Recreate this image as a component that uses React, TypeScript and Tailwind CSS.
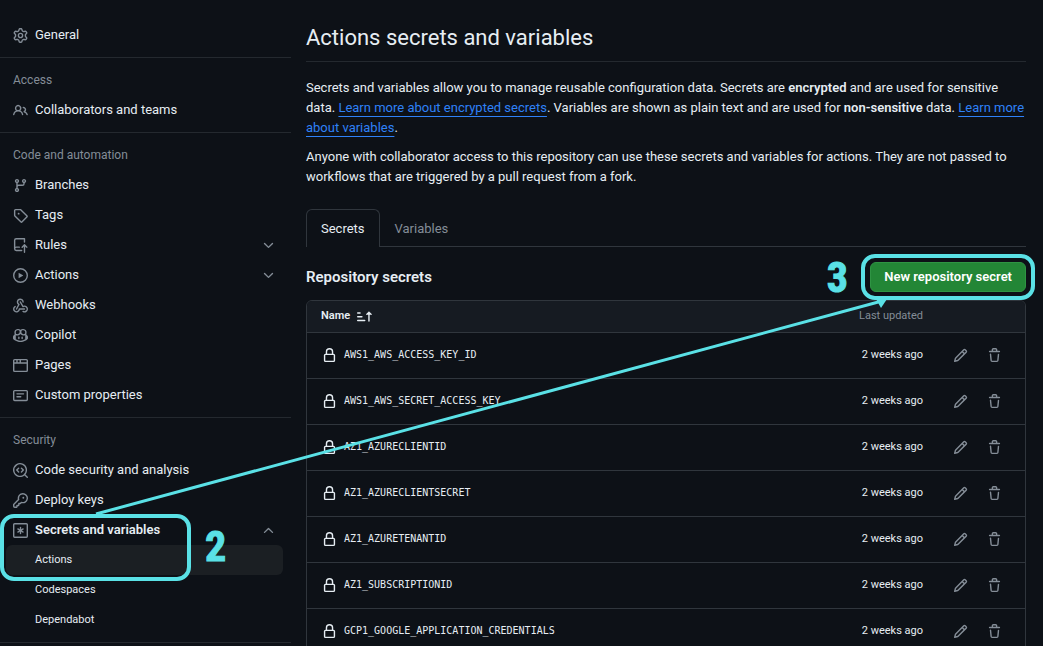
import type { ReactNode } from 'react';

const ICONS = {
  gear: 'M8 0a8.2 8.2 0 0 1 .701.031C9.444.095 9.99.645 10.16 1.29l.288 1.107c.018.066.079.158.212.224.231.114.454.243.668.386.123.082.233.09.299.071l1.103-.303c.644-.176 1.392.021 1.82.63.27.385.506.792.704 1.218.315.675.111 1.422-.364 1.891l-.814.806c-.049.048-.098.147-.088.294.016.257.016.515 0 .772-.01.147.038.246.088.294l.814.806c.475.469.679 1.216.364 1.891a7.977 7.977 0 0 1-.704 1.217c-.428.61-1.176.807-1.82.63l-1.102-.302c-.067-.019-.177-.011-.3.071a5.909 5.909 0 0 1-.668.386c-.133.066-.194.158-.211.224l-.29 1.106c-.168.646-.715 1.196-1.458 1.26a8.006 8.006 0 0 1-1.402 0c-.743-.064-1.289-.614-1.458-1.26l-.289-1.106c-.018-.066-.079-.158-.212-.224a5.738 5.738 0 0 1-.668-.386c-.123-.082-.233-.09-.299-.071l-1.103.303c-.644.176-1.392-.021-1.82-.63a8.12 8.12 0 0 1-.704-1.218c-.315-.675-.111-1.422.363-1.891l.815-.806c.05-.048.098-.147.088-.294a6.214 6.214 0 0 1 0-.772c.01-.147-.038-.246-.088-.294l-.815-.806C.635 6.045.431 5.298.746 4.623a7.92 7.92 0 0 1 .704-1.217c.428-.61 1.176-.807 1.82-.63l1.102.302c.067.019.177.011.3-.071.214-.143.437-.272.668-.386.133-.066.194-.158.211-.224l.29-1.106C6.009.645 6.556.095 7.299.03 7.53.01 7.764 0 8 0Zm-.571 1.525c-.036.003-.108.036-.137.146l-.289 1.105c-.147.561-.549.967-.998 1.189-.173.086-.34.183-.5.29-.417.278-.97.423-1.529.27l-1.103-.303c-.109-.03-.175.016-.195.045-.22.312-.412.644-.573.99-.014.031-.021.11.059.19l.815.806c.411.406.562.957.53 1.456a4.709 4.709 0 0 0 0 .582c.032.499-.119 1.05-.53 1.456l-.815.806c-.081.08-.073.159-.059.19.162.346.353.677.573.989.02.03.085.076.195.046l1.102-.303c.56-.153 1.113-.008 1.53.27.161.107.328.204.501.29.447.222.85.629.997 1.189l.289 1.105c.029.109.101.143.137.146a6.6 6.6 0 0 0 1.142 0c.036-.003.108-.036.137-.146l.289-1.105c.147-.561.549-.967.998-1.189.173-.086.34-.183.5-.29.417-.278.97-.423 1.529-.27l1.103.303c.109.029.175-.016.195-.045.22-.313.411-.644.573-.99.014-.031.021-.11-.059-.19l-.815-.806c-.411-.406-.562-.957-.53-1.456a4.709 4.709 0 0 0 0-.582c-.032-.499.119-1.05.53-1.456l.815-.806c.081-.08.073-.159.059-.19a6.464 6.464 0 0 0-.573-.989c-.02-.03-.085-.076-.195-.046l-1.102.303c-.56.153-1.113.008-1.53-.27a4.44 4.44 0 0 0-.501-.29c-.447-.222-.85-.629-.997-1.189l-.289-1.105c-.029-.11-.101-.143-.137-.146a6.6 6.6 0 0 0-1.142 0ZM11 8a3 3 0 1 1-6 0 3 3 0 0 1 6 0ZM9.5 8a1.5 1.5 0 1 0-3.001.001A1.5 1.5 0 0 0 9.5 8Z',
  people: 'M2 5.5a3.5 3.5 0 1 1 5.898 2.549 5.508 5.508 0 0 1 3.034 4.084.75.75 0 1 1-1.482.235 4 4 0 0 0-7.9 0 .75.75 0 0 1-1.482-.236A5.507 5.507 0 0 1 3.102 8.05 3.493 3.493 0 0 1 2 5.5ZM11 4a3.001 3.001 0 0 1 2.22 5.018 5.01 5.01 0 0 1 2.56 3.012.749.749 0 0 1-.885.954.752.752 0 0 1-.549-.514 3.507 3.507 0 0 0-2.522-2.372.75.75 0 0 1-.574-.73v-.352a.75.75 0 0 1 .416-.672A1.5 1.5 0 0 0 11 5.5.75.75 0 0 1 11 4Zm-5.5-.5a2 2 0 1 0-.001 3.999A2 2 0 0 0 5.5 3.5Z',
  branch: 'M9.5 3.25a2.25 2.25 0 1 1 3 2.122V6A2.5 2.5 0 0 1 10 8.5H6a1 1 0 0 0-1 1v1.128a2.251 2.251 0 1 1-1.5 0V5.372a2.25 2.25 0 1 1 1.5 0v1.836A2.493 2.493 0 0 1 6 7h4a1 1 0 0 0 1-1v-.628A2.25 2.25 0 0 1 9.5 3.25Zm-6 0a.75.75 0 1 0 1.5 0 .75.75 0 0 0-1.5 0Zm8.25-.75a.75.75 0 1 0 0 1.5.75.75 0 0 0 0-1.5ZM4.25 12a.75.75 0 1 0 0 1.5.75.75 0 0 0 0-1.5Z',
  tag: 'M1 7.775V2.75C1 1.784 1.784 1 2.75 1h5.025c.464 0 .91.184 1.238.513l6.25 6.25a1.75 1.75 0 0 1 0 2.474l-5.026 5.026a1.75 1.75 0 0 1-2.474 0l-6.25-6.25A1.752 1.752 0 0 1 1 7.775Zm1.5 0c0 .066.026.13.073.177l6.25 6.25a.25.25 0 0 0 .354 0l5.025-5.025a.25.25 0 0 0 0-.354l-6.25-6.25a.25.25 0 0 0-.177-.073H2.75a.25.25 0 0 0-.25.25ZM6 5a1 1 0 1 1 0 2 1 1 0 0 1 0-2Z',
  rules: 'M1 2.5A2.5 2.5 0 0 1 3.5 0h8.75a.75.75 0 0 1 .75.75v3.5a.75.75 0 0 1-1.5 0V1.5h-8a1 1 0 0 0-1 1v6.708A2.493 2.493 0 0 1 3.5 9h3.25a.75.75 0 0 1 0 1.5H3.5a1 1 0 0 0 0 2h5.75a.75.75 0 0 1 0 1.5H3.5A2.5 2.5 0 0 1 1 11.5Zm13.23 7.79h-.001l-1.224-1.224v6.184a.75.75 0 0 1-1.5 0V9.066L10.28 10.29a.75.75 0 0 1-1.06-1.061l2.505-2.504a.75.75 0 0 1 1.06 0L15.29 9.23a.751.751 0 0 1-.018 1.042.751.751 0 0 1-1.042.018Z',
  play: 'M8 0a8 8 0 1 1 0 16A8 8 0 0 1 8 0ZM1.5 8a6.5 6.5 0 1 0 13 0 6.5 6.5 0 0 0-13 0Zm4.879-2.773 4.264 2.559a.25.25 0 0 1 0 .428l-4.264 2.559A.25.25 0 0 1 6 10.559V5.442a.25.25 0 0 1 .379-.215Z',
  webhook: 'M5.5 4.25a2.25 2.25 0 0 1 4.5 0 .75.75 0 0 0 1.5 0 3.75 3.75 0 1 0-6.14 2.889l-2.272 4.258a.75.75 0 0 0 1.324.706L7 7.25a.75.75 0 0 0-.309-1.015A2.25 2.25 0 0 1 5.5 4.25Z M7.364 3.607a.75.75 0 0 1 1.03.257l2.608 4.349a3.75 3.75 0 1 1-.628 6.785.75.75 0 0 1 .752-1.299 2.25 2.25 0 1 0-.033-3.88.75.75 0 0 1-1.03-.256L7.107 4.636a.75.75 0 0 1 .257-1.03Z M2.9 8.776A.75.75 0 0 1 2.625 9.8 2.25 2.25 0 1 0 6 11.75a.75.75 0 0 1 .75-.751h5.5a.75.75 0 0 1 0 1.5H7.425a3.751 3.751 0 1 1-5.55-3.998.75.75 0 0 1 1.024.274Z',
  copilot: 'M7.998 15.035c-4.562 0-7.873-2.914-7.998-3.749V9.338c.085-.628.677-1.686 1.588-2.065.013-.07.024-.143.036-.218.029-.183.06-.384.126-.612-.201-.508-.254-1.084-.254-1.656 0-.87.128-1.769.693-2.484.579-.733 1.494-1.124 2.724-1.261 1.206-.134 2.262.034 2.944.765.05.053.096.108.139.165.044-.057.094-.112.143-.165.682-.731 1.738-.899 2.944-.765 1.23.137 2.145.528 2.724 1.261.566.715.693 1.614.693 2.484 0 .572-.053 1.148-.254 1.656.066.228.098.429.126.612.012.076.024.148.037.218.924.385 1.522 1.471 1.591 2.095v1.872c0 .766-3.351 3.795-8.002 3.795Zm0-1.485c2.28 0 4.584-1.11 5.002-1.433V7.862l-.023-.116c-.49.21-1.075.291-1.727.291-1.146 0-2.059-.327-2.71-.991A3.222 3.222 0 0 1 8 6.303a3.24 3.24 0 0 1-.544.743c-.65.664-1.563.991-2.71.991-.652 0-1.236-.081-1.727-.291l-.023.116v4.255c.419.323 2.722 1.433 5.002 1.433ZM6.762 2.83c-.193-.206-.637-.413-1.682-.297-1.019.113-1.479.404-1.713.7-.247.312-.369.789-.369 1.554 0 .793.129 1.171.308 1.371.162.181.519.379 1.442.379.853 0 1.339-.235 1.638-.54.315-.322.527-.827.617-1.553.117-.935-.037-1.395-.241-1.614Zm4.155-.297c-1.044-.116-1.488.091-1.681.297-.204.219-.359.679-.242 1.614.091.726.303 1.231.618 1.553.299.305.784.54 1.638.54.922 0 1.28-.198 1.442-.379.179-.2.308-.578.308-1.371 0-.765-.123-1.242-.37-1.554-.233-.296-.693-.587-1.713-.7Z M6.25 9.037a.75.75 0 0 1 .75.75v1.501a.75.75 0 0 1-1.5 0V9.787a.75.75 0 0 1 .75-.75Zm4.25.75v1.501a.75.75 0 0 1-1.5 0V9.787a.75.75 0 0 1 1.5 0Z',
  browser: 'M0 2.75C0 1.784.784 1 1.75 1h12.5c.966 0 1.75.784 1.75 1.75v10.5A1.75 1.75 0 0 1 14.25 15H1.75A1.75 1.75 0 0 1 0 13.25ZM14.5 6h-13v7.25c0 .138.112.25.25.25h12.5a.25.25 0 0 0 .25-.25Zm-6-3.5v2h6V2.75a.25.25 0 0 0-.25-.25ZM5 2.5v2h2v-2Zm-3.25 0a.25.25 0 0 0-.25.25V4.5h2v-2Z',
  note: 'M0 3.75C0 2.784.784 2 1.75 2h12.5c.966 0 1.75.784 1.75 1.75v8.5A1.75 1.75 0 0 1 14.25 14H1.75A1.75 1.75 0 0 1 0 12.25Zm1.75-.25a.25.25 0 0 0-.25.25v8.5c0 .138.112.25.25.25h12.5a.25.25 0 0 0 .25-.25v-8.5a.25.25 0 0 0-.25-.25ZM3.5 6.25a.75.75 0 0 1 .75-.75h7a.75.75 0 0 1 0 1.5h-7a.75.75 0 0 1-.75-.75Zm.75 2.25h4a.75.75 0 0 1 0 1.5h-4a.75.75 0 0 1 0-1.5Z',
  codescan: 'M8.47 4.97a.75.75 0 0 0 0 1.06L9.94 7.5 8.47 8.97a.75.75 0 1 0 1.06 1.06l2-2a.75.75 0 0 0 0-1.06l-2-2a.75.75 0 0 0-1.06 0ZM6.53 6.03a.75.75 0 0 0-1.06-1.06l-2 2a.75.75 0 0 0 0 1.06l2 2a.75.75 0 1 0 1.06-1.06L5.06 7.5l1.47-1.47Z M12.246 13.307a7.501 7.501 0 1 1 1.06-1.06l2.474 2.473a.749.749 0 0 1-.326 1.275.749.749 0 0 1-.734-.215ZM1.5 7.5a6.002 6.002 0 0 0 3.608 5.504 6.002 6.002 0 0 0 6.486-1.117.748.748 0 0 1 .292-.293A6 6 0 1 0 1.5 7.5Z',
  key: 'M10.5 0a5.499 5.499 0 1 1-1.288 10.848l-.932.932a.749.749 0 0 1-.53.22H7v.75a.749.749 0 0 1-.22.53l-.5.5a.749.749 0 0 1-.53.22H5v.75a.749.749 0 0 1-.22.53l-.5.5a.749.749 0 0 1-.53.22h-2A1.75 1.75 0 0 1 0 14.25v-2c0-.199.079-.389.22-.53l4.932-4.932A5.5 5.5 0 0 1 10.5 0Zm-4 5.5c-.001.431.069.86.205 1.269a.75.75 0 0 1-.181.768L1.5 12.56v1.69c0 .138.112.25.25.25h1.69l.06-.06v-1.19a.75.75 0 0 1 .75-.75h1.19l.06-.06v-1.19a.75.75 0 0 1 .75-.75h1.19l1.023-1.025a.75.75 0 0 1 .768-.18A4 4 0 1 0 6.5 5.5ZM11 6a1 1 0 1 1 0-2 1 1 0 0 1 0 2Z',
  asterisk: 'M0 1.75C0 .784.784 0 1.75 0h12.5C15.216 0 16 .784 16 1.75v12.5A1.75 1.75 0 0 1 14.25 16H1.75A1.75 1.75 0 0 1 0 14.25ZM1.75 1.5a.25.25 0 0 0-.25.25v12.5c0 .138.112.25.25.25h12.5a.25.25 0 0 0 .25-.25V1.75a.25.25 0 0 0-.25-.25Z M8 4a.75.75 0 0 1 .75.75V6.7l1.69-.975a.75.75 0 0 1 .75 1.3L9.5 8l1.69.976a.75.75 0 0 1-.75 1.298L8.75 9.3v1.951a.75.75 0 0 1-1.5 0V9.299l-1.69.976a.75.75 0 0 1-.75-1.3L6.5 8l-1.69-.975a.75.75 0 0 1 .75-1.3l1.69.976V4.75A.75.75 0 0 1 8 4Z',
  down: 'M12.78 5.22a.749.749 0 0 1 0 1.06l-4.25 4.25a.749.749 0 0 1-1.06 0L3.22 6.28a.749.749 0 1 1 1.06-1.06L8 8.939l3.72-3.719a.749.749 0 0 1 1.06 0Z',
  up: 'M3.22 10.53a.749.749 0 0 1 0-1.06l4.25-4.25a.749.749 0 0 1 1.06 0l4.25 4.25a.749.749 0 1 1-1.06 1.06L8 6.811 4.28 10.53a.749.749 0 0 1-1.06 0Z',
  lock: 'M4 4a4 4 0 0 1 8 0v2h.25c.966 0 1.75.784 1.75 1.75v5.5A1.75 1.75 0 0 1 12.25 15h-8.5A1.75 1.75 0 0 1 2 13.25v-5.5C2 6.784 2.784 6 3.75 6H4Zm8.25 3.5h-8.5a.25.25 0 0 0-.25.25v5.5c0 .138.112.25.25.25h8.5a.25.25 0 0 0 .25-.25v-5.5a.25.25 0 0 0-.25-.25ZM10.5 6V4a2.5 2.5 0 1 0-5 0v2Z',
  pencil: 'M11.013 1.427a1.75 1.75 0 0 1 2.474 0l1.086 1.086a1.75 1.75 0 0 1 0 2.474l-8.61 8.61c-.21.21-.47.364-.756.445l-3.251.93a.75.75 0 0 1-.927-.928l.929-3.25c.081-.286.235-.547.445-.758l8.61-8.61Zm.176 4.823L9.75 4.81l-6.286 6.287a.253.253 0 0 0-.064.108l-.558 1.953 1.953-.558a.253.253 0 0 0 .108-.064Zm1.238-3.763a.25.25 0 0 0-.354 0L10.811 3.75l1.439 1.44 1.263-1.263a.25.25 0 0 0 0-.354Z',
  trash: 'M11 1.75V3h2.25a.75.75 0 0 1 0 1.5H2.75a.75.75 0 0 1 0-1.5H5V1.75C5 .784 5.784 0 6.75 0h2.5C10.216 0 11 .784 11 1.75ZM4.496 6.675l.66 6.6a.25.25 0 0 0 .249.225h5.19a.25.25 0 0 0 .249-.225l.66-6.6a.75.75 0 0 1 1.492.149l-.66 6.6A1.748 1.748 0 0 1 10.595 15h-5.19a1.75 1.75 0 0 1-1.741-1.575l-.66-6.6a.75.75 0 1 1 1.492-.15ZM6.5 1.75V3h3V1.75a.25.25 0 0 0-.25-.25h-2.5a.25.25 0 0 0-.25.25Z',
  sort: 'm12.927 2.573 3 3A.25.25 0 0 1 15.75 6H13.5v6.75a.75.75 0 0 1-1.5 0V6H9.75a.25.25 0 0 1-.177-.427l3-3a.25.25 0 0 1 .354 0ZM0 12.25a.75.75 0 0 1 .75-.75h7.5a.75.75 0 0 1 0 1.5H.75a.75.75 0 0 1-.75-.75Zm0-4a.75.75 0 0 1 .75-.75h4.5a.75.75 0 0 1 0 1.5H.75A.75.75 0 0 1 0 8.25Zm0-4a.75.75 0 0 1 .75-.75h2.5a.75.75 0 0 1 0 1.5H.75A.75.75 0 0 1 0 4.25Z',
};

type IconName = keyof typeof ICONS;

function Icon({ name, className = '' }: { name: IconName; className?: string }) {
  return (
    <svg viewBox="0 0 16 16" fill="currentColor" aria-hidden="true" className={`size-[15px] shrink-0 ${className}`}>
      <path d={ICONS[name]} />
    </svg>
  );
}

function NavLink({ icon, label }: { icon: IconName; label: string }) {
  return (
    <li>
      <a href="#" className="flex h-[30px] items-center gap-[7px] pr-2 pl-[13px]">
        <Icon name={icon} className="text-[#848d97]" />
        {label}
      </a>
    </li>
  );
}

function NavToggle({ icon, label, open = false }: { icon: IconName; label: string; open?: boolean }) {
  return (
    <button
      type="button"
      aria-expanded={open}
      className={`flex h-[30px] w-full items-center gap-[7px] pr-[15px] pl-[13px] text-left ${open ? 'font-semibold' : ''}`}
    >
      <Icon name={icon} className="text-[#848d97]" />
      <span className="grow">{label}</span>
      <Icon name={open ? 'up' : 'down'} className="text-[#848d97]" />
    </button>
  );
}

function Divider() {
  return <hr className="my-[7px] border-[#24292f]" />;
}

function GroupTitle({ children }: { children: ReactNode }) {
  return <h2 className="flex h-[30px] items-center pl-[13px] text-[12px] text-[#848d97]">{children}</h2>;
}

function Sidebar() {
  return (
    <nav aria-label="Repository settings" className="w-[291px] shrink-0 pt-5">
      <ul>
        <NavLink icon="gear" label="General" />
      </ul>
      <Divider />
      <GroupTitle>Access</GroupTitle>
      <ul>
        <NavLink icon="people" label="Collaborators and teams" />
      </ul>
      <Divider />
      <GroupTitle>Code and automation</GroupTitle>
      <ul>
        <NavLink icon="branch" label="Branches" />
        <NavLink icon="tag" label="Tags" />
        <li>
          <NavToggle icon="rules" label="Rules" />
        </li>
        <li>
          <NavToggle icon="play" label="Actions" />
        </li>
        <NavLink icon="webhook" label="Webhooks" />
        <NavLink icon="copilot" label="Copilot" />
        <NavLink icon="browser" label="Pages" />
        <NavLink icon="note" label="Custom properties" />
      </ul>
      <Divider />
      <GroupTitle>Security</GroupTitle>
      <ul>
        <NavLink icon="codescan" label="Code security and analysis" />
        <NavLink icon="key" label="Deploy keys" />
        <li className="relative">
          <NavToggle icon="asterisk" label="Secrets and variables" open />
          <ul className="pr-2 pl-1.5 text-[11px]">
            <li>
              <a href="#" aria-current="page" className="flex h-[30px] items-center rounded-md bg-[#1b1f23] pl-[29px]">
                Actions
              </a>
            </li>
            <li>
              <a href="#" className="flex h-[30px] items-center pl-[29px]">Codespaces</a>
            </li>
            <li>
              <a href="#" className="flex h-[30px] items-center pl-[29px]">Dependabot</a>
            </li>
          </ul>
          <div className="absolute -top-px left-0 h-[67px] w-[191px] rounded-[14px] border-4 border-[#5ae1e6]" />
          <StepNumber className="top-2 left-[205px]">2</StepNumber>
        </li>
      </ul>
      <Divider />
    </nav>
  );
}

function StepNumber({ children, className }: { children: ReactNode; className: string }) {
  return (
    <span
      className={`absolute font-['Roboto_Condensed','Open_Sans_Condensed','Noto_Sans_Condensed','Liberation_Sans',sans-serif] text-[42px] leading-[48px] font-bold text-[#5ae1e6] [-webkit-text-stroke:1px_#5ae1e6] ${className}`}
    >
      {children}
    </span>
  );
}

const SECRETS = [
  'AWS1_AWS_ACCESS_KEY_ID',
  'AWS1_AWS_SECRET_ACCESS_KEY',
  'AZ1_AZURECLIENTID',
  'AZ1_AZURECLIENTSECRET',
  'AZ1_AZURETENANTID',
  'AZ1_SUBSCRIPTIONID',
  'GCP1_GOOGLE_APPLICATION_CREDENTIALS',
];

function SecretsTable() {
  return (
    <div className="overflow-hidden rounded-md border border-[#30363d]">
      <table className="w-full border-collapse text-[11px]">
        <thead>
          <tr className="h-[31px] border-b border-[#30363d] bg-[#161b22]">
            <th scope="col" className="pl-[14px] text-left font-semibold">
              <button type="button" className="flex items-center gap-[7px]">
                Name <Icon name="sort" />
              </button>
            </th>
            <th scope="col" className="w-[100px] text-right font-normal whitespace-nowrap text-[#848d97]">Last updated</th>
            <th scope="col" aria-label="Manage" className="w-[102px]" />
          </tr>
        </thead>
        <tbody>
          {SECRETS.map((name) => (
            <tr key={name} className="h-[46px] border-b border-[#30363d]">
              <td className="pl-[15px]">
                <div className="flex items-center gap-[7px]">
                  <Icon name="lock" />
                  <code className="font-['DejaVu_Sans_Mono',monospace] text-[10px]">{name}</code>
                </div>
              </td>
              <td className="text-right whitespace-nowrap">2 weeks ago</td>
              <td className="pr-[23px]">
                <div className="flex justify-end gap-[19px] text-[#848d97]">
                  <button type="button" aria-label={`Edit ${name}`}>
                    <Icon name="pencil" />
                  </button>
                  <button type="button" aria-label={`Delete ${name}`}>
                    <Icon name="trash" />
                  </button>
                </div>
              </td>
            </tr>
          ))}
        </tbody>
      </table>
    </div>
  );
}

function DocLink({ children }: { children: ReactNode }) {
  return (
    <a href="#" className="text-[#2f81f7] underline underline-offset-4">
      {children}
    </a>
  );
}

export default function App() {
  return (
    <div className="relative flex h-screen overflow-hidden bg-[#0d1117] font-['Roboto',sans-serif] text-[13px] leading-5 text-[#e6edf3]">
      <Sidebar />
      <main className="min-w-0 grow pt-[23px] pr-[17px] pl-[15px]">
        <h1 className="border-b border-[#24292f] pb-2 text-[22px] leading-[30px]">Actions secrets and variables</h1>
        <p className="mt-4">
          Secrets and variables allow you to manage reusable configuration data. Secrets are{' '}
          <strong className="font-semibold">encrypted</strong> and are used for sensitive data.{' '}
          <DocLink>Learn more about encrypted secrets</DocLink>. Variables are shown as plain text and are used for{' '}
          <strong className="font-semibold">non-sensitive</strong> data. <DocLink>Learn more about variables</DocLink>.
        </p>
        <p className="mt-[9px]">
          Anyone with collaborator access to this repository can use these secrets and variables for actions. They are not
          passed to workflows that are triggered by a pull request from a fork.
        </p>
        <div role="tablist" className="mt-[22px] flex h-[38px] border-b border-[#30363d]">
          <button
            type="button"
            role="tab"
            aria-selected="true"
            className="-mb-px rounded-t-md border border-b-0 border-[#30363d] bg-[#0d1117] px-[14px] pt-px"
          >
            Secrets
          </button>
          <button type="button" role="tab" aria-selected="false" className="px-[15px] pt-[3px] text-[#848d97]">
            Variables
          </button>
        </div>
        <div className="mt-[15px] mb-2 flex items-center justify-between">
          <h2 className="text-[15px] font-semibold">Repository secrets</h2>
          <div className="relative">
            <button
              type="button"
              className="h-[30px] rounded-md border border-[#2f9443] bg-[#238636] px-[13px] font-semibold text-white"
            >
              New repository secret
            </button>
            <div className="pointer-events-none absolute -inset-x-[9px] -inset-y-2 rounded-[14px] border-4 border-[#5ae1e6]" />
            <StepNumber className="-top-2 right-[178px]">3</StepNumber>
          </div>
        </div>
        <SecretsTable />
      </main>
      <svg className="pointer-events-none absolute top-0 left-0" width="1043" height="646" aria-hidden="true">
        <path d="M96 514 882 301" stroke="#5ae1e6" strokeWidth="3" />
        <path d="M876 299h11l-6 9Z" fill="#5ae1e6" />
      </svg>
    </div>
  );
}
